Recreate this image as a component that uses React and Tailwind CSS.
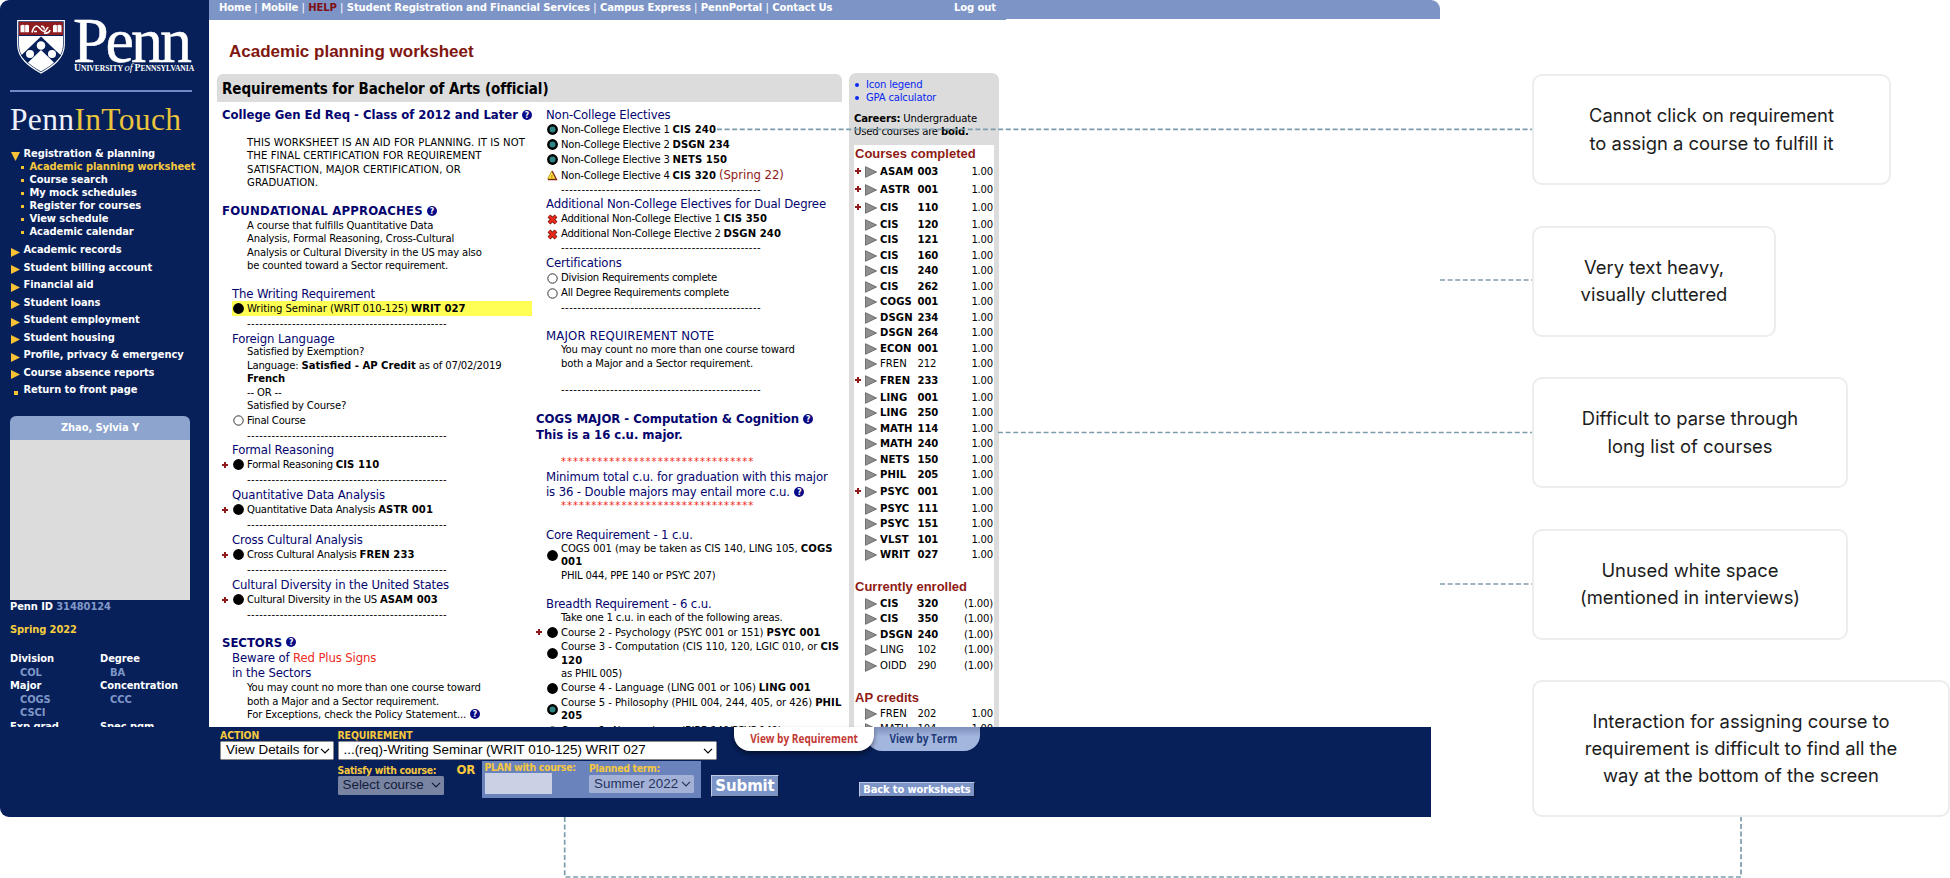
import React from 'react';

const BODY = "font-['DejaVu_Sans_Condensed','DejaVu_Sans',sans-serif]";
const ARIAL = "font-['Liberation_Sans',Arial,sans-serif]";
const SERIF = "font-['Liberation_Serif',serif]";

function Help({ className = '' }) {
  return (
    <span
      className={`inline-flex size-[10px] items-center justify-center rounded-full bg-[#0a0a86] text-[8.500px] leading-none font-bold tracking-normal text-white align-[1.500px] ${className}`}
    >
      ?
    </span>
  );
}

function Plus({ className = '' }) {
  return (
    <svg viewBox="0 0 6 6" className={`size-[6px] ${className}`}>
      <path d="M3 0v6M0 3h6" stroke="#8f1a1a" strokeWidth="2" />
    </svg>
  );
}

function Status({ kind }) {
  if (kind === 'fail')
    return (
      <svg viewBox="0 0 11 11" className="size-[11px]">
        <path d="M2 2l7 7M9 2l-7 7" stroke="#5a1a10" strokeWidth="4" />
        <path d="M2 2l7 7M9 2l-7 7" stroke="#e8291c" strokeWidth="2.6" />
      </svg>
    );
  if (kind === 'warn')
    return (
      <svg viewBox="0 0 11 11" className="size-[11px]">
        <path d="M4.600 1.200L8.600 9H.6z" fill="#f8e733" stroke="#a8781c" strokeWidth="0.700" />
        <path d="M5.200 1L9.600 9.600H1" fill="none" stroke="#7c2413" strokeWidth="1.200" />
        <path d="M4.800 5v3" stroke="#d9822b" strokeWidth="1.200" />
      </svg>
    );
  return (
    <svg viewBox="0 0 11 11" className="size-[11px]">
      {kind === 'open' ? (
        <circle cx="5.5" cy="5.5" r="4.7" fill="#fff" stroke="#333" strokeWidth="1" />
      ) : (
        <circle cx="5.5" cy="5.5" r="5.4" fill="#000" />
      )}
      {kind === 'plan' && <circle cx="5.5" cy="5.5" r="3" fill="#2f8584" />}
    </svg>
  );
}

const BodyText = ({ className = '', children }) => (
  <div className={`pl-[25px] text-[11.200px] leading-[13.500px] tracking-[-0.180px] text-black [&_b]:tracking-[0px] ${className}`}>{children}</div>
);

const Head = ({ className = 'h-[15px]', children }) => (
  <div className={`flex items-center pl-[10px] text-[13px] leading-[15px] tracking-[-0.130px] whitespace-nowrap text-[#04046e] ${className}`}>
    <span>{children}</span>
  </div>
);

const Major = ({ className = 'h-[15.500px]', children }) => (
  <div className={`flex items-center text-[13px] leading-[15px] font-bold tracking-[-0.030px] whitespace-nowrap text-[#04046e] ${className}`}>
    <span>{children}</span>
  </div>
);

const Dash = ({ className = 'h-[15px]' }) => (
  <div className={`flex items-center pl-[25px] text-[11.200px] leading-[13px] tracking-[0.450px] ${className}`}>
    -------------------------------------------------
  </div>
);

const Stars = ({ className = 'h-[14px]' }) => (
  <div className={`flex items-end pl-[25px] text-[11.200px] leading-[13px] tracking-[1.010px] text-[#ee2a22] ${className}`}>
    ********************************
  </div>
);

function Item({ kind, plus, wide, className = 'h-[15px]', children }) {
  return (
    <div className={`flex items-center ${className}`}>
      <span className="flex w-[10.500px] shrink-0">{plus && <Plus />}</span>
      <span className="flex w-[14.500px] shrink-0">
        <Status kind={kind} />
      </span>
      <span className={`text-[11.200px] leading-[13.500px] whitespace-nowrap text-black [&_b]:tracking-[0.080px] ${wide ? 'tracking-[-0.080px]' : 'tracking-[-0.240px]'}`}>
        {children}
      </span>
    </div>
  );
}

function Shield() {
  return (
    <svg viewBox="0 0 48 54" className="h-[54px] w-[48px]">
      <path d="M.7.7h46.6v24C47.3 38 36 46 24 53 12 46 .7 38 .7 24.700z" fill="#07205a" stroke="#fff" strokeWidth="1.200" />
      <path d="M2 2h44v13H2z" fill="#8f1d20" />
      <path d="M2 16h44v9c0 11.500-9.500 19.500-22 26.500C11.500 44.500 2 36.500 2 25z" fill="#fff" />
      <path d="M24 16.500L44 35.500 37.500 43 24 30 10.500 43 4 35.500z" fill="#07205a" />
      <circle cx="24" cy="25.500" r="4.300" fill="#fff" />
      <circle cx="13" cy="34" r="4" fill="#fff" />
      <circle cx="35" cy="34" r="4" fill="#fff" />
      <path d="M3.500 5.500c1.500-1 3-1 4.300 0 1.300-1 2.800-1 4.200 0v6.800H3.500zM36 5.500c1.500-1 3-1 4.300 0 1.300-1 2.800-1 4.200 0v6.800H36z" fill="#fff" />
      <path d="M7.800 5.500v7M40.300 5.500v7" stroke="#8f1d20" strokeWidth="0.600" />
      <path d="M15 12.500c1-4 2-6 4.500-6.500 3 0 4 5 7.500 5.500 3 0 2-4 4.500-4M17 11.500h3M24 6.500c2.500-.5 3.500 1.500 3 3M27 13c3 .5 5.500 0 6-3" stroke="#fff" strokeWidth="1.600" fill="none" />
    </svg>
  );
}

const subNav = ['Academic planning worksheet', 'Course search', 'My mock schedules', 'Register for courses', 'View schedule', 'Academic calendar'];
const mainNav = ['Academic records', 'Student billing account', 'Financial aid', 'Student loans', 'Student employment', 'Student housing', 'Profile, privacy & emergency', 'Course absence reports', 'Return to front page'];

function Sidebar() {
  return (
    <aside className="flex h-[727px] w-[209px] shrink-0 flex-col overflow-hidden bg-[#07205a] text-[11px] font-bold tracking-[-0.070px] text-white">
      <div className="mt-[20px] flex h-[54px] shrink-0 gap-[9px] pl-[17px]">
        <Shield />
        <div className={`${SERIF} flex flex-col font-normal`}>
          <div className="-ml-px h-[45px] text-[64px] leading-[42px] tracking-[-3px] [-webkit-text-stroke:0.500px_white]">Penn</div>
          <div className="text-[7.600px] leading-[12px] font-bold tracking-[-0.020px] whitespace-nowrap">
            <span className="text-[9.600px]">U</span>NIVERSITY <i className="text-[10.500px] font-normal">of</i> <span className="text-[9.600px]">P</span>ENNSYLVANIA
          </div>
        </div>
      </div>
      <div className="mt-[16px] ml-[10px] h-[2px] w-[182px] shrink-0 bg-[#7188c4]" />
      <div className={`${SERIF} mt-[12px] h-[32px] shrink-0 pl-[10px] text-[31.500px] leading-[32px] font-normal tracking-[0.350px] text-[#eef1fa]`}>
        Penn<span className="text-[#eac43c]">InTouch</span>
      </div>

      <div className="mt-[12px] flex h-[12px] shrink-0 items-center pl-[11px] leading-[12px]">
        <svg viewBox="0 0 9 9" className="mt-[4px] mr-[3.500px] size-[9px]"><path d="M0 0h9L4.500 9z" fill="#f7c234" /></svg>
        Registration &amp; planning
      </div>
      {subNav.map((s, i) => (
        <div key={s} className={`flex h-[13px] shrink-0 items-center pl-[21px] leading-[13px] whitespace-nowrap ${i === 0 ? 'text-[#f7c83e]' : ''}`}>
          <span className="mt-[2px] mr-[5.500px] size-[3px] bg-[#f7c234]" />
          {s}
        </div>
      ))}
      <div className="mt-[3.500px] flex shrink-0 flex-col">
        {mainNav.map((s, i) => (
          <div key={s} className="flex h-[17.500px] items-center pl-[11px] whitespace-nowrap">
            {i < 8 ? (
              <svg viewBox="0 0 9 9" className="mt-[4px] mr-[3.500px] size-[9px]"><path d="M0 0v9L9 4.500z" fill="#f7c234" /></svg>
            ) : (
              <span className="mt-[5px] mr-[5.500px] ml-[3px] size-[4px] bg-[#f7c234]" />
            )}
            {s}
          </div>
        ))}
      </div>

      <div className="mt-[16.500px] ml-[10px] flex h-[24px] w-[180px] shrink-0 items-center justify-center rounded-t-[6px] bg-[#8ca4ce] pt-px">Zhao, Sylvia Y</div>
      <div className="ml-[10px] h-[160px] w-[180px] shrink-0 bg-[#dcdcdc]" />
      <div className="mt-[1px] flex h-[13px] shrink-0 items-center pl-[10px]">
        Penn ID&nbsp;<span className="text-[#8399c8]">31480124</span>
      </div>
      <div className="mt-[10px] flex h-[13px] shrink-0 items-center pl-[10px] text-[#f7ce3e]">Spring 2022</div>
      <div className="mt-[15.500px] grid w-[200px] shrink-0 auto-rows-[13.500px] grid-cols-[90px_110px] items-center pl-[10px] leading-[13.500px]">
        <span>Division</span><span>Degree</span>
        <span className="pl-[10px] text-[#7f96c8]">COL</span><span className="pl-[10px] text-[#7f96c8]">BA</span>
        <span>Major</span><span>Concentration</span>
        <span className="pl-[10px] text-[#7f96c8]">COGS</span><span className="pl-[10px] text-[#7f96c8]">CCC</span>
        <span className="pl-[10px] text-[#7f96c8]">CSCI</span><span />
        <span>Exp grad</span><span>Spec pgm</span>
      </div>
    </aside>
  );
}

function LeftColumn() {
  return (
    <div className="flex w-[315px] shrink-0 flex-col pl-[5px]">
      <Major className="h-[25px]">College Gen Ed Req - Class of 2012 and Later <Help /></Major>
      <BodyText className="mt-[8.500px] !tracking-[0.090px] whitespace-nowrap">
        THIS WORKSHEET IS AN AID FOR PLANNING. IT IS NOT<br />THE FINAL CERTIFICATION FOR REQUIREMENT<br />SATISFACTION, MAJOR CERTIFICATION, OR<br />GRADUATION.
      </BodyText>
      <Major className="mt-[13px] h-[16px]"><span className="tracking-[0.200px]">FOUNDATIONAL APPROACHES</span> <Help /></Major>
      <BodyText>
        A course that fulfills Quantitative Data<br />Analysis, Formal Reasoning, Cross-Cultural<br />Analysis or Cultural Diversity in the US may also<br />be counted toward a Sector requirement.
      </BodyText>
      <Head className="mt-[14px] h-[14.500px]">The Writing Requirement</Head>
      <div className="ml-[10px] h-[15px] bg-[#ffff54]">
        <div className="-ml-[10px]">
          <Item kind="done" wide>Writing Seminar (WRIT 010-125) <b>WRIT 027</b></Item>
        </div>
      </div>
      <Dash />
      <Head className="h-[14px]">Foreign Language</Head>
      <BodyText className="mb-[0.500px]">
        Satisfied by Exemption?<br />Language: <b>Satisfied - AP Credit</b> as of 07/02/2019<br /><b>French</b><br />-- OR --<br />Satisfied by Course?
      </BodyText>
      <Item kind="open">Final Course</Item>
      <Dash className="h-[14px]" />
      {[
        ['Formal Reasoning', 'Formal Reasoning', 'CIS 110'],
        ['Quantitative Data Analysis', 'Quantitative Data Analysis', 'ASTR 001'],
        ['Cross Cultural Analysis', 'Cross Cultural Analysis', 'FREN 233'],
        ['Cultural Diversity in the United States', 'Cultural Diversity in the US', 'ASAM 003'],
      ].map(([h, t, c]) => (
        <React.Fragment key={h}>
          <Head>{h}</Head>
          <Item kind="done" plus>{t} <b>{c}</b></Item>
          <Dash />
        </React.Fragment>
      ))}
      <Major className="mt-[12px] h-[16px]">SECTORS <Help /></Major>
      <Head>Beware of <span className="text-[#ee2a22]">Red Plus Signs</span></Head>
      <Head>in the Sectors</Head>
      <BodyText className="mt-[1px]">
        You may count no more than one course toward<br />both a Major and a Sector requirement.<br />For Exceptions, check the Policy Statement... <Help className="ml-px" />
      </BodyText>
    </div>
  );
}

function MiddleColumn() {
  return (
    <div className="flex w-[317px] shrink-0 flex-col pl-[4px] pt-[5px]">
      <Head>Non-College Electives</Head>
      <Item kind="plan">Non-College Elective 1 <b>CIS 240</b></Item>
      <Item kind="plan">Non-College Elective 2 <b>DSGN 234</b></Item>
      <Item kind="plan">Non-College Elective 3 <b>NETS 150</b></Item>
      <Item kind="warn" className="h-[16px]">
        Non-College Elective 4 <b>CIS 320</b> <span className="text-[13px] tracking-[-0.050px] text-[#8f1a1a]">(Spring 22)</span>
      </Item>
      <Dash className="h-[13px]" />
      <Head className="h-[15.500px]">Additional Non-College Electives for Dual Degree</Head>
      <Item kind="fail">Additional Non-College Elective 1 <b>CIS 350</b></Item>
      <Item kind="fail">Additional Non-College Elective 2 <b>DSGN 240</b></Item>
      <Dash className="h-[12.500px]" />
      <Head className="mt-[1px] h-[15.500px]">Certifications</Head>
      <Item kind="open">Division Requirements complete</Item>
      <Item kind="open">All Degree Requirements complete</Item>
      <Dash className="h-[13.500px]" />
      <Head className="mt-[14px] h-[15px]"><span className="tracking-[0.180px]">MAJOR REQUIREMENT NOTE</span></Head>
      <BodyText>You may count no more than one course toward<br />both a Major and a Sector requirement.</BodyText>
      <Dash className="mt-[12.500px] h-[14.500px]" />
      <div className="mt-[14px] flex flex-col">
        <Major>COGS MAJOR - Computation &amp; Cognition <Help /></Major>
        <Major>This is a 16 c.u. major.</Major>
      </div>
      <Stars className="mt-[12.500px]" />
      <Head className="mt-[1px] h-[15.500px]">Minimum total c.u. for graduation with this major</Head>
      <Head className="h-[15.500px]">is 36 - Double majors may entail more c.u. <Help className="ml-px" /></Head>
      <Stars className="h-[12.500px]" />
      <Head className="mt-[14.500px] h-[15px]">Core Requirement - 1 c.u.</Head>
      <Item kind="done" wide className="h-[27px]">COGS 001 (may be taken as CIS 140, LING 105, <b>COGS<br />001</b></Item>
      <BodyText>PHIL 044, PPE 140 or PSYC 207)</BodyText>
      <Head className="mt-[14px] h-[15px]">Breadth Requirement - 6 c.u.</Head>
      <BodyText>Take one 1 c.u. in each of the following areas.</BodyText>
      <Item kind="done" plus wide className="h-[15.500px]">Course 2 - Psychology (PSYC 001 or 151) <b>PSYC 001</b></Item>
      <Item kind="done" wide className="h-[27px]">Course 3 - Computation (CIS 110, 120, LGIC 010, or <b>CIS<br />120</b></Item>
      <BodyText>as PHIL 005)</BodyText>
      <Item kind="done" wide>Course 4 - Language (LING 001 or 106) <b>LING 001</b></Item>
      <Item kind="plan" wide className="h-[27px]">Course 5 - Philosophy (PHIL 004, 244, 405, or 426) <b>PHIL<br />205</b></Item>
      <Item kind="open" className="h-[17px]">Course 6 - Neuroscience (BIBB 249/PSYC 149)</Item>
    </div>
  );
}

const completed = [
  ['ASAM', '003', 1, 1], ['ASTR', '001', 1, 1], ['CIS', '110', 1, 1], ['CIS', '120', 1], ['CIS', '121', 1], ['CIS', '160', 1], ['CIS', '240', 1], ['CIS', '262', 1],
  ['COGS', '001', 1], ['DSGN', '234', 1], ['DSGN', '264', 1], ['ECON', '001', 1], ['FREN', '212', 0], ['FREN', '233', 1, 1], ['LING', '001', 1], ['LING', '250', 1],
  ['MATH', '114', 1], ['MATH', '240', 1], ['NETS', '150', 1], ['PHIL', '205', 1], ['PSYC', '001', 1, 1], ['PSYC', '111', 1], ['PSYC', '151', 1], ['VLST', '101', 1], ['WRIT', '027', 1],
];
const enrolled = [['CIS', '320', 1], ['CIS', '350', 1], ['DSGN', '240', 1], ['LING', '102', 0], ['OIDD', '290', 0]];
const ap = [['FREN', '202', 0], ['MATH', '104', 0]];

function Course({ row, credit = '1.00' }) {
  const [dept, num, bold, plus] = row;
  return (
    <div className={`flex shrink-0 items-center ${plus ? 'h-[18px]' : 'h-[15.500px]'} text-[11.200px] leading-[14px]`}>
      <span className="flex w-[11px] shrink-0 pl-px">{plus ? <Plus className="-mt-[2px]" /> : null}</span>
      <svg viewBox="0 0 12 12" className="mr-[3px] h-[12px] w-[12px] shrink-0">
        <path d="M.5.7v10.600L11.500 6z" fill="#8f8f8f" stroke="#5c5c5c" strokeWidth="0.800" />
      </svg>
      <span className={`w-[37.500px] ${bold ? 'font-bold tracking-[0.100px]' : 'tracking-[0px]'}`}>{dept}</span>
      <span className={`grow ${bold ? 'font-bold tracking-[-0.100px]' : 'tracking-[-0.200px]'}`}>{num}</span>
      <span className="pr-[1px] tracking-[-0.200px]">{credit}</span>
    </div>
  );
}

function Panel() {
  return (
    <div className="mt-[73px] flex h-[654px] w-[150px] shrink-0 flex-col overflow-hidden rounded-t-[7px] bg-[#dcdcdc] px-[5px] text-[11.200px]">
      <ul className="mt-[5px] flex shrink-0 flex-col leading-[13px] tracking-[-0.200px] text-[#0a28f0]">
        {['Icon legend', 'GPA calculator'].map((t) => (
          <li key={t} className="flex h-[13px] items-center">
            <span className="mr-[7px] ml-px size-[4px] rounded-full bg-[#0a28f0]" />{t}
          </li>
        ))}
      </ul>
      <div className="mt-[7.500px] h-[33.500px] shrink-0 leading-[13.500px] tracking-[-0.180px] whitespace-nowrap">
        <b>Careers:</b> Undergraduate<br />Used courses are <b>bold.</b>
      </div>
      <div className="flex h-[600px] shrink-0 flex-col bg-white">
        <div className={`${ARIAL} h-[18px] shrink-0 pl-px text-[13px] leading-[17px] font-bold text-[#8f1a14]`}>Courses completed</div>
        {completed.map((r) => <Course key={r[0] + r[1]} row={r} />)}
        <div className={`${ARIAL} mt-[15px] h-[18px] shrink-0 pl-px text-[13px] leading-[17px] font-bold text-[#8f1a14]`}>Currently enrolled</div>
        {enrolled.map((r) => <Course key={r[0] + r[1]} row={r} credit="(1.00)" />)}
        <div className={`${ARIAL} mt-[15px] h-[17.500px] shrink-0 pl-px text-[13px] leading-[17px] font-bold text-[#8f1a14]`}>AP credits</div>
        {ap.map((r) => <Course key={r[0] + r[1]} row={r} />)}
      </div>
    </div>
  );
}

function Chevron() {
  return (
    <svg viewBox="0 0 10 6" className="h-[6px] w-[10px] shrink-0">
      <path d="M1 .8l4 4 4-4" fill="none" stroke="currentColor" strokeWidth="1.200" />
    </svg>
  );
}

function Select({ className, children }) {
  return (
    <div className={`${ARIAL} flex items-center justify-between rounded-[1.500px] pl-[5px] pr-[3px] text-[13.400px] font-normal whitespace-nowrap ${className}`}>
      <span>{children}</span>
      <Chevron />
    </div>
  );
}

function BottomBar() {
  return (
    <div className="flex h-[90px] w-[1431px] rounded-bl-[9px] bg-[#07205a] pl-[220px] text-[10.400px] font-bold text-[#f7c83e]">
      <div className="flex w-[117.500px] flex-col">
        <div className="mt-[2px] h-[12px] leading-[12px] tracking-[-0.100px]">ACTION</div>
        <Select className="h-[19px] w-[114px] border border-[#8a8a8a] bg-white text-black">View Details for</Select>
      </div>
      <div className="flex w-[396px] flex-col">
        <div className="mt-[2px] h-[12px] leading-[12px] tracking-[-0.100px]">REQUIREMENT</div>
        <Select className="h-[19px] w-[379.500px] border border-[#8a8a8a] bg-white text-black">...(req)-Writing Seminar (WRIT 010-125) WRIT 027</Select>
        <div className="flex">
          <div className="flex w-[119px] flex-col">
            <div className="mt-[3.500px] h-[12.500px] leading-[12.500px] tracking-[-0.300px]">Satisfy with course:</div>
            <Select className="h-[18.500px] w-[106px] bg-[#7984a3] text-[#121c38]">Select course</Select>
          </div>
          <div className="w-[25px] pt-[2.500px] text-[13px] leading-[14px] tracking-[-0.200px]">OR</div>
          <div className="mt-[1px] flex h-[36.500px] w-[219.500px] shrink-0 bg-[#6a83bc] pl-[3px]">
            <div className="flex w-[104.500px] flex-col">
              <div className="h-[12px] leading-[12px] tracking-[-0.300px] whitespace-nowrap">PLAN with course:</div>
              <div className="h-[21px] w-[67px] bg-[#cbd1e4]" />
            </div>
            <div className="flex flex-col">
              <div className="mt-[1px] h-[12.500px] leading-[12px] tracking-[-0.300px]">Planned term:</div>
              <Select className="h-[18.500px] w-[105px] bg-[#a3b1d6] text-[#26345c]">Summer 2022</Select>
            </div>
          </div>
        </div>
      </div>
      <div className="flex">
        <div className="mt-[48px] ml-[-22.500px] flex h-[22px] w-[68px] items-center justify-center border border-[#c0cae4] border-r-[#101a38] border-b-[#101a38] bg-[#7d94c7] pt-px text-[16.600px] tracking-[-0.100px] text-white">Submit</div>
        <div className="flex w-[250px] flex-col">
          <div className="-ml-[45px] flex h-[24px]">
            <div className="z-10 flex h-[24px] w-[140px] shrink-0 items-center justify-center rounded-b-[16px] bg-white text-[#c23a35] shadow-[0_3px_5px_rgba(0,0,0,0.450)]">
              <span className="scale-x-[0.840] font-['Open_Sans',sans-serif] text-[12px] whitespace-nowrap">View by Requirement</span>
            </div>
            <div className="-ml-[8px] flex h-[24px] w-[114px] shrink-0 items-center justify-center rounded-b-[16px] bg-linear-to-b from-[#7d8fbb] to-[#a3b6de] to-40% text-[#1f3a78]">
              <span className="scale-x-[0.840] font-['Open_Sans',sans-serif] text-[12px] whitespace-nowrap">View by Term</span>
            </div>
          </div>
          <div className="mt-[31px] ml-[80px] flex h-[15px] w-[116px] items-center justify-center border border-[#c0cae4] border-r-[#101a38] border-b-[#101a38] bg-[#7d94c7] pt-px text-[11px] tracking-[-0.120px] whitespace-nowrap text-white">Back to worksheets</div>
        </div>
      </div>
    </div>
  );
}

const notes = [
  ['w-[359px] h-[111px]', ['Cannot click on requirement', 'to assign a course to fulfill it']],
  ['w-[244px] h-[111px]', ['Very text heavy,', 'visually cluttered']],
  ['w-[316px] h-[111px]', ['Difficult to parse through', 'long list of courses']],
  ['w-[316px] h-[111px]', ['Unused white space', '(mentioned in interviews)']],
  ['w-[418px] h-[137px]', ['Interaction for assigning course to', 'requirement is difficult to find all the', 'way at the bottom of the screen']],
];

const navLinks = ['Home', 'Mobile', 'HELP', 'Student Registration and Financial Services', 'Campus Express', 'PennPortal', 'Contact Us'];

export default function App() {
  return (
    <div className={`${BODY} relative flex h-[878px] w-[1950px] overflow-hidden bg-white`}>
      <div className="flex w-[1532px] shrink-0 flex-col">
        <div className="flex h-[727px] w-[1440px] overflow-hidden rounded-tl-[9px] rounded-tr-[9px]">
          <Sidebar />
          <div className="flex grow flex-col">
            <nav className="flex h-[20px] shrink-0 text-[11.200px] leading-[15px] font-bold tracking-[-0.150px] whitespace-nowrap text-white">
              <div className="flex w-[797px] bg-[#7d94c7] pl-[10px]">
                <span className="w-[735px]">
                  {navLinks.map((l, i) => (
                    <React.Fragment key={l}>
                      {i > 0 && <span className="font-normal tracking-[0.100px]"> | </span>}
                      <span className={l === 'HELP' ? 'text-[#7f1216]' : ''}>{l}</span>
                    </React.Fragment>
                  ))}
                </span>
                <span>Log out</span>
              </div>
              <div className="h-[19px] grow bg-[#7d94c7]" />
            </nav>
            <div className="flex h-[707px]">
              <div className="flex w-[640px] shrink-0 flex-col pl-[8px]">
                <h1 className={`${ARIAL} mt-[22px] h-[20px] shrink-0 pl-[12px] text-[17px] leading-[20px] font-bold text-[#7f1710]`}>Academic planning worksheet</h1>
                <h2 className="mt-[12px] h-[28px] w-[625px] shrink-0 rounded-t-[6px] bg-[#dcdcdc] pl-[5px] text-[15px] leading-[30px] font-bold tracking-[-0.070px]">Requirements for Bachelor of Arts (official)</h2>
                <div className="flex">
                  <LeftColumn />
                  <MiddleColumn />
                </div>
              </div>
              <div className="-mt-[20px] flex">
                <Panel />
              </div>
            </div>
          </div>
        </div>
        <BottomBar />
      </div>

      <div className="flex flex-col gap-[40.500px] pt-[74px] font-['Inter',sans-serif] text-[18.400px] leading-[27.200px] text-[#1c1c1c]">
        {notes.map(([size, lines]) => (
          <div key={lines[0]} className={`${size} flex shrink-0 flex-col items-center justify-center rounded-[10px] border-2 border-[#ededed] bg-white whitespace-nowrap`}>
            {lines.map((l) => <span key={l}>{l}</span>)}
          </div>
        ))}
      </div>

      <svg viewBox="0 0 1950 878" className="pointer-events-none absolute inset-0 h-[878px] w-[1950px]">
        <g fill="none" stroke="#7d9dac" strokeWidth="1.700" strokeDasharray="5 2.600">
          <path d="M717 129.300H1532M1440 280H1532M998 432.500H1532M1440 584H1532" />
          <path d="M564.700 817V877H1741V817" />
        </g>
      </svg>
    </div>
  );
}
